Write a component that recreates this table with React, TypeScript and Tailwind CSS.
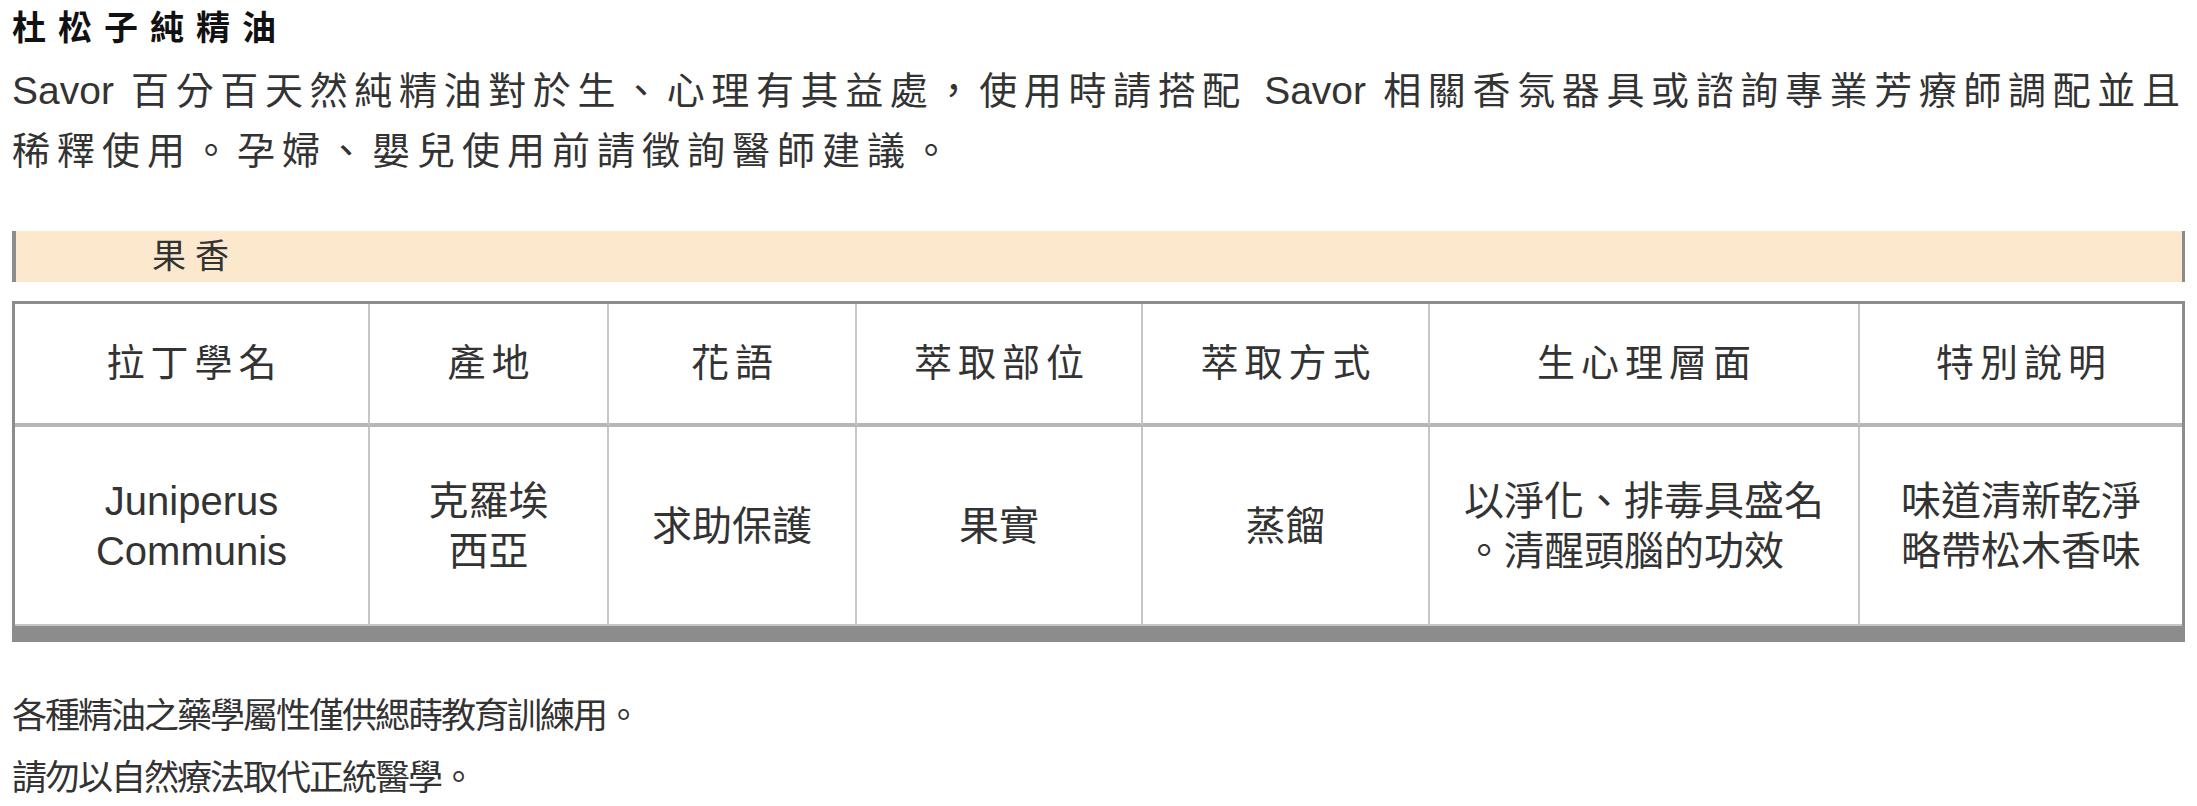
import React from 'react';

// --- Data ---
const headers = ['拉丁學名', '產地', '花語', '萃取部位', '萃取方式', '生心理層面', '特別說明'];

const Savor: React.FC = () => <span className="text-[39px] tracking-normal">Savor</span>;

// --- Table cell ---
const HeadCell: React.FC<{ children: React.ReactNode; last?: boolean }> = ({ children, last }) => (
  <div className={`h-[123px] flex items-center justify-center border-b-4 border-[#b6b6b6] ${last ? '' : 'border-r-2 border-r-[#c6c6c6]'}`}>
    <span className="text-[38px] tracking-[6px] pl-[6px] text-[#333]">{children}</span>
  </div>
);

const BodyCell: React.FC<{ children: React.ReactNode; last?: boolean }> = ({ children, last }) => (
  <div className={`h-[199px] flex items-center justify-center text-center border-b-2 border-[#c6c6c6] ${last ? '' : 'border-r-2'}`}>
    <div className="text-[40px] leading-[50px] text-[#333]">{children}</div>
  </div>
);

export default function App() {
  return (
    <div className="w-[2197px] h-[806px] overflow-hidden bg-white px-[12px] text-[#333] font-['Liberation_Sans','Noto_Sans_CJK_TC',sans-serif]">
      <h1 className="h-[56px] leading-[56px] text-[34px] font-bold tracking-[12px] text-[#111]">杜松子純精油</h1>

      <div className="mt-[5px] text-[38px] leading-[60px] tracking-[7px]">
        <div className="tracking-[5px] whitespace-nowrap text-justify [text-align-last:justify]">
          <Savor /> 百分百天然純精油對於生、心理有其益處，使用時請搭配 <Savor /> 相關香氛器具或諮詢專業芳療師調配並且
        </div>
        <div>稀釋使用。孕婦、嬰兒使用前請徵詢醫師建議。</div>
      </div>

      <div className="mt-[50px] h-[51px] flex items-center bg-[#fce9cd] border-l-4 border-r-[3px] border-[#8c8c8c] pl-[136px] text-[34px] tracking-[9px]">
        果香
      </div>

      <div className="mt-[19px] border-[3px] border-b-[16px] border-[#8c8c8c] grid grid-cols-[355px_239px_248px_286px_287px_430px_1fr]">
        {headers.map((h, i) => (
          <HeadCell key={h} last={i === headers.length - 1}>{h}</HeadCell>
        ))}
        <BodyCell>Juniperus<br />Communis</BodyCell>
        <BodyCell>克羅埃<br />西亞</BodyCell>
        <BodyCell>求助保護</BodyCell>
        <BodyCell>果實</BodyCell>
        <BodyCell>蒸餾</BodyCell>
        <BodyCell>
          <div className="text-left">以淨化、排毒具盛名<br />。清醒頭腦的功效</div>
        </BodyCell>
        <BodyCell last>味道清新乾淨<br />略帶松木香味</BodyCell>
      </div>

      <div className="mt-[42px] text-[35px] tracking-[-2px]">
        <p className="leading-[63px]">各種精油之藥學屬性僅供緦蒔教育訓練用。</p>
        <p className="mt-[3px] leading-[56px]">請勿以自然療法取代正統醫學。</p>
      </div>
    </div>
  );
}
